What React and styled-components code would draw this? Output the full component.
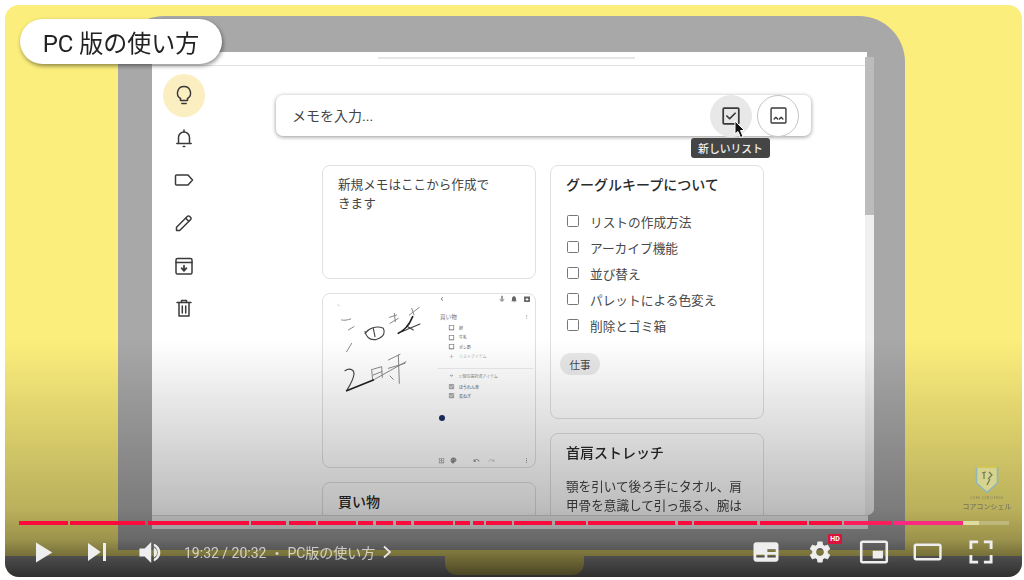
import React from "react";
import styled, { createGlobalStyle } from "styled-components";
import {
  MdSettings,
  MdOutlineCheckBoxOutlineBlank,
  MdCheckBox,
  MdChevronLeft,
  MdMicNone,
  MdMoreVert,
  MdAdd,
  MdExpandMore,
  MdUndo,
  MdRedo,
  MdPalette,
  MdOutlineAddBox,
  MdNotifications,
  MdArchive,
} from "react-icons/md";

const GlobalStyle = createGlobalStyle`
  html, body {
    margin: 0;
    padding: 0;
    background: #fff;
    overflow: hidden;
  }
  body {
    font-family: Roboto, "Noto Sans CJK JP", sans-serif;
  }
`;

//---------------------------------------------------------- frame
const Frame = styled.div`
  position: relative;
  margin: 5px 0 0 5px;
  width: 1017px;
  height: 572px;
  border-radius: 14px;
  overflow: hidden;
  background: #fcee7c;
  padding-top: 11px;
  box-sizing: border-box;
`;
const Laptop = styled.div`
  margin-left: 113px;
  width: 787px;
  height: 534px;
  box-sizing: border-box;
  padding: 36px 31px 0 34px;
  background: #a8a8a8;
  border-radius: 46px 46px 0 0;
`;
const Base = styled.div`
  margin-top: 6px;
  height: 21px;
  background: #a8a8a8;
  display: flex;
`;
const Notch = styled.div`
  margin-left: 440px;
  width: 139px;
  height: 19px;
  background: #fcee7c;
  border-radius: 0 0 12px 12px;
`;
const Shade = styled.div`
  position: absolute;
  inset: 0;
  pointer-events: none;
  background: linear-gradient(
    to bottom,
    rgba(0, 0, 0, 0) 58.6%,
    rgba(0, 0, 0, 0.12) 72.6%,
    rgba(0, 0, 0, 0.26) 88%,
    rgba(0, 0, 0, 0.38) 93.4%,
    rgba(0, 0, 0, 0.54) 96.4%,
    rgba(0, 0, 0, 0.72) 100%
  );
`;
const Badge = styled.div`
  position: absolute;
  left: 15px;
  top: 14px;
  width: 202px;
  height: 45px;
  border-radius: 23px;
  background: #fff;
  box-shadow: 1px 2px 4px rgba(0, 0, 0, 0.45);
  display: flex;
  align-items: center;
  justify-content: center;
  font-size: 24px;
  color: #222;
  white-space: nowrap;
  filter: blur(0.3px);
`;

//---------------------------------------------------------- laptop screen
const Screen = styled.div`
  display: flex;
  flex-direction: column;
  filter: blur(0.4px);
`;
const TopStrip = styled.div`
  height: 14px;
  display: flex;
`;
const TabArea = styled.div`
  width: 715px;
  flex: none;
  box-sizing: border-box;
  background: #fff;
  border-bottom: 1px solid #e2e2e2;
  display: flex;
  justify-content: center;
`;
const TopTab = styled.div`
  margin: 5px 6px 0 0;
  width: 257px;
  height: 2px;
  background: #e6e6e6;
`;
const ScrollCap = styled.div`
  margin: 5px 0 0 -2px;
  width: 9px;
  height: 9px;
  background: #bcbcbc;
`;
const Body = styled.div`
  height: 449px;
  display: flex;
  background: #fff;
  overflow: hidden;
  border-radius: 0 0 7px 0;
`;
const BottomStrip = styled.div`
  width: 716px;
  height: 14px;
  background: #f4f4f4;
  border-top: 1px solid #d8d8d8;
  box-sizing: border-box;
`;
const Sidebar = styled.nav`
  width: 64px;
  flex: none;
  padding: 8px 0 0 11px;
  box-sizing: border-box;
  display: flex;
  flex-direction: column;
`;
const NavItem = styled.div`
  width: 42px;
  height: 42.6px;
  display: flex;
  align-items: center;
  justify-content: center;
  border-radius: 50%;
  background: ${(p) => (p.$active ? "#fbeec0" : "transparent")};
`;
const StrokeIcon = styled.svg`
  width: ${(p) => p.$size || 24}px;
  height: ${(p) => p.$size || 24}px;
  fill: none;
  stroke: #3a3a3a;
  stroke-width: ${(p) => p.$stroke || 1.5};
  stroke-linecap: round;
  stroke-linejoin: round;
`;
const Main = styled.main`
  flex: 1;
  padding: 29px 0 0 60px;
  display: flex;
  flex-direction: column;
`;
const Scrollbar = styled.div`
  width: 9px;
  flex: none;
  background: #f0f0f0;
  display: flex;
  flex-direction: column;
`;
const ScrollThumb = styled.div`
  height: 149px;
  background: #bcbcbc;
`;

//---------------------------------------------------------- note input
const NoteInput = styled.div`
  position: relative;
  width: 535px;
  height: 41px;
  box-sizing: border-box;
  padding: 0 12px 0 16px;
  border-radius: 7px;
  background: #fff;
  box-shadow: 0 1px 4px rgba(0, 0, 0, 0.42);
  display: flex;
  align-items: center;
  gap: 5px;
`;
const Placeholder = styled.div`
  flex: 1;
  margin-top: -2px;
  font-size: 14px;
  color: #444;
`;
const RoundButton = styled.div`
  width: 42px;
  height: 42px;
  border-radius: 50%;
  box-sizing: border-box;
  display: flex;
  align-items: center;
  justify-content: center;
  background: ${(p) => (p.$hover ? "#e8e8e8" : "#fff")};
  border: ${(p) => (p.$hover ? "none" : "1.5px solid #c4c4c4")};
`;
const Tooltip = styled.div`
  position: absolute;
  right: 41px;
  top: 43px;
  width: 79px;
  height: 20px;
  border-radius: 3px;
  background: #454545;
  color: #eee;
  font-size: 10.8px;
  font-weight: 500;
  display: flex;
  align-items: center;
  justify-content: center;
  white-space: nowrap;
`;
const Cursor = styled.svg`
  position: absolute;
  left: 458px;
  top: 25px;
`;

//---------------------------------------------------------- notes
const Columns = styled.div`
  margin: 29px 0 0 46px;
  display: flex;
  gap: 14px;
`;
const Column = styled.div`
  width: 214px;
  display: flex;
  flex-direction: column;
  gap: 14px;
`;
const Card = styled.article`
  flex: none;
  height: ${(p) => p.$h}px;
  box-sizing: border-box;
  padding: ${(p) => p.$pad || "9px 15px"};
  border: 1px solid #e0e0e0;
  border-radius: 8px;
  background: #fff;
  overflow: hidden;
  display: ${(p) => (p.$row ? "flex" : "block")};
`;
const CardText = styled.div`
  font-size: 12.6px;
  line-height: 19px;
  color: #444;
`;
const CardTitle = styled.h3`
  margin: 0 0 14px;
  font-size: 14px;
  font-weight: 500;
  line-height: 20px;
  color: #2a2a2a;
`;
const CheckList = styled.ul`
  margin: -1px 0 0 1px;
  padding: 0;
  list-style: none;
`;
const CheckItem = styled.li`
  height: 26px;
  display: flex;
  align-items: center;
  gap: 11px;
  font-size: 12.7px;
  color: #484848;
`;
const CheckBoxMark = styled.span`
  width: 12px;
  height: 12px;
  box-sizing: border-box;
  border: 1.5px solid #777;
  border-radius: 1.5px;
`;
const Chip = styled.span`
  display: inline-flex;
  align-items: center;
  justify-content: center;
  margin: 15px 0 0 -6px;
  width: 40px;
  height: 22px;
  border-radius: 11px;
  background: #e9e9e9;
  color: #444;
  font-size: 10.5px;
`;

//---------------------------------------------------------- photo note
const Doodle = styled.svg`
  width: 115px;
  height: 172px;
  flex: none;
  fill: none;
  stroke-linecap: round;
  stroke-linejoin: round;
`;
const MiniPanel = styled.div`
  width: 95px;
  flex: none;
  display: flex;
  flex-direction: column;
  padding-bottom: 2px;
`;
const MiniRow = styled.div`
  height: ${(p) => p.$h || 9.5}px;
  margin-top: ${(p) => p.$mt || 0}px;
  padding-left: ${(p) => p.$pl || 0}px;
  display: flex;
  align-items: center;
  gap: ${(p) => p.$gap ?? 4}px;
  white-space: nowrap;
  color: ${(p) => p.$color || "#555"};
  font-size: ${(p) => p.$fs || 4}px;
`;
const MiniGrow = styled.span`
  flex: 1;
`;
const MiniRule = styled.div`
  margin-top: 7px;
  height: 1px;
  background: #ececec;
`;
const MiniDot = styled.div`
  margin: 15px 0 0 1px;
  width: 6px;
  height: 6px;
  border-radius: 50%;
  background: #1e2f66;
`;
const MiniFoot = styled(MiniRow)`
  margin-top: auto;
`;
const Blank = styled.span`
  width: ${(p) => p.$w}px;
  flex: none;
`;

//---------------------------------------------------------- player
const Controls = styled.div`
  position: absolute;
  left: 0;
  right: 0;
  bottom: 0;
`;
const Track = styled.div`
  margin: 0 0 2px 14px;
  display: flex;
  height: 4px;
`;
const Segment = styled.div`
  flex: none;
  height: 4px;
  background: ${(p) => p.$color};
`;
const ControlRow = styled.div`
  height: 50px;
  display: flex;
  align-items: center;
  padding-left: 16px;
`;
const Ctl = styled.svg`
  flex: none;
  width: ${(p) => p.$size}px;
  height: ${(p) => p.$size}px;
  margin-left: ${(p) => p.$ml || 0}px;
  fill: #eee;
`;
const Chevron = styled.svg`
  flex: none;
  margin-left: 8px;
  fill: none;
  stroke: #e8e8e8;
  stroke-width: 1.8;
`;
const TimeText = styled.div`
  margin-left: 8px;
  font-size: 14px;
  color: rgba(255, 255, 255, 0.68);
  white-space: nowrap;
`;
const RightControls = styled.div`
  margin-left: auto;
  padding-right: 15px;
  display: flex;
  align-items: center;
`;
const GearWrap = styled.div`
  position: relative;
  margin: 0 18px 0 16px;
  width: 26px;
  height: 26px;
  font-size: 26px;
  line-height: 0;
  color: #eee;
`;
const HdBadge = styled.span`
  position: absolute;
  left: 21px;
  top: -5px;
  width: 14px;
  height: 10px;
  border-radius: 1px;
  background: #d8143c;
  color: #fff;
  font-size: 7px;
  font-weight: 700;
  line-height: 10px;
  text-align: center;
`;
const Watermark = styled.div`
  position: absolute;
  right: 10px;
  top: 460px;
  width: 50px;
  display: flex;
  flex-direction: column;
  align-items: center;
  color: #85825c;
`;
const WatermarkSmall = styled.div`
  margin-top: 2px;
  font-size: 3px;
  letter-spacing: 0.6px;
  white-space: nowrap;
`;
const WatermarkName = styled.div`
  margin-top: 1px;
  font-size: 7px;
  font-weight: 700;
  white-space: nowrap;
`;

//---------------------------------------------------------- icons
const icons = [
  <>
    <path d="M12 3.5 a6.5 6.5 0 0 0 -3.5 12 V17.5 h7 V15.5 a6.5 6.5 0 0 0 -3.5 -12 Z" />
    <path d="M9.8 20.5 h4.4" />
  </>,
  <>
    <path d="M6.5 17 V11.5 a5.5 5.5 0 0 1 11 0 V17" />
    <path d="M4.8 17.5 h14.4" />
    <path d="M12 4 v2" />
    <path d="M11.2 20.5 h1.6" />
  </>,
  <path d="M4.5 7 h11.5 l4.5 5 -4.5 5 h-11.5 a1 1 0 0 1 -1 -1 v-8 a1 1 0 0 1 1 -1 Z" />,
  <>
    <path d="M4.5 19.5 v-3.2 L15.5 5.3 a1.4 1.4 0 0 1 2 0 l1.2 1.2 a1.4 1.4 0 0 1 0 2 L7.7 19.5 Z" />
    <path d="M13.7 7.2 l3.1 3.1" />
  </>,
  <>
    <rect x="4" y="4.5" width="16" height="15.5" rx="1.5" />
    <path d="M4 8.5 h16" />
    <path d="M12 11.5 v4.5 M9.6 14.2 l2.4 2.6 2.4 -2.6" strokeWidth="1.7" />
  </>,
  <>
    <path d="M5 6.5 h14" />
    <path d="M9.5 6.5 V4.5 h5 v2" />
    <path d="M7 6.5 V20 h10 V6.5" />
    <path d="M10.3 10 v7 M13.7 10 v7" />
  </>,
];

//---------------------------------------------------------- data
const listItems = [
  "リストの作成方法",
  "アーカイブ機能",
  "並び替え",
  "パレットによる色変え",
  "削除とゴミ箱",
];
// start and end of each chapter on the progress bar
const chapters = [
  [19, 68], [70, 145], [148, 249], [251, 286], [289, 316], [318, 356],
  [358, 373], [376, 393], [396, 411], [414, 453], [455, 470], [473, 484],
  [486, 512], [514, 552], [555, 586], [588, 675], [678, 692], [694, 757],
  [760, 807], [809, 842], [844, 892], [894, 963], [963, 979], [979, 1009],
];
const segmentColor = (start) => {
  if (start >= 979) return "rgba(255,255,255,0.22)";
  if (start >= 963) return "#dfdca0";
  if (start >= 894) return "#fb2a80";
  if (start >= 844) return "#fb1c5c";
  return "#fb0a3c";
};

function App() {
  return (
    <>
      <GlobalStyle />
      <Frame>
        <Laptop>
          <Screen>
            <TopStrip>
              <TabArea>
                <TopTab />
              </TabArea>
              <ScrollCap />
            </TopStrip>
            <Body>
              <Sidebar>
                {icons.map((icon, i) => (
                  <NavItem key={i} $active={i === 0}>
                    <StrokeIcon viewBox="0 0 24 24">{icon}</StrokeIcon>
                  </NavItem>
                ))}
              </Sidebar>
              <Main>
                <NoteInput>
                  <Placeholder>メモを入力...</Placeholder>
                  <RoundButton $hover>
                    <StrokeIcon viewBox="0 0 24 24" $size={22} $stroke={1.9}>
                      <rect x="3.5" y="3.5" width="17" height="17" rx="1" />
                      <path d="M7.5 12 l3 3 6 -6" />
                    </StrokeIcon>
                  </RoundButton>
                  <RoundButton>
                    <StrokeIcon viewBox="0 0 24 24" $size={21} $stroke={1.6}>
                      <rect x="3.5" y="3.5" width="17" height="17" rx="1" />
                      <path d="M7 16 l2 -2 2 2 M13 16 l2 -2 2 2" />
                    </StrokeIcon>
                  </RoundButton>
                  <Tooltip>新しいリスト</Tooltip>
                  <Cursor width="13" height="19" viewBox="0 0 13 19">
                    <path
                      d="M1 1 L1 14 L4 11.5 L6.5 17.5 L9 16.5 L6.5 10.5 L10.5 10.5 Z"
                      fill="#111"
                      stroke="#fff"
                      strokeWidth="1"
                    />
                  </Cursor>
                </NoteInput>
                <Columns>
                  <Column>
                    <Card $h={114}>
                      <CardText>
                        新規メモはここから作成で
                        <br />
                        きます
                      </CardText>
                    </Card>
                    <Card $h={175} $row $pad="0">
                      <Doodle viewBox="-21 -18 345 516">
                        <g stroke="#777" strokeWidth="2.6">
                          <path d="M25 15 l1 1" />
                          <path d="M35 60 C44 62 52 60 62 57" />
                          <path d="M55 90 L72 80" />
                          <path d="M50 155 L65 130" />
                          <path d="M178 52 L200 45" />
                          <path d="M193 40 L196 65" />
                          <path d="M180 70 L205 55" />
                          <path d="M238 45 L268 22" />
                          <path d="M245 25 L252 45" />
                          <path d="M125 208 L128 240" />
                          <path d="M128 208 L155 200 L157 232" />
                          <path d="M130 225 L155 215" />
                          <path d="M175 180 L210 163" />
                          <path d="M205 165 L208 250" />
                          <path d="M175 205 L225 190" />
                          <path d="M180 228 L190 238" />
                          <path d="M130 240 L228 185" />
                        </g>
                        <g stroke="#444" strokeWidth="3.4">
                          <path d="M105 95 C110 115 120 122 140 118 C165 110 165 95 160 85 C140 75 115 85 105 100" />
                          <path d="M130 85 L135 110" />
                          <path d="M215 95 L270 72" />
                          <path d="M230 78 L250 90" />
                          <path d="M45 212 C55 205 72 205 72 222 C70 240 60 255 50 272" />
                        </g>
                        <g stroke="#222" strokeWidth="5">
                          <path d="M205 100 C225 90 240 70 248 50" />
                          <path d="M50 272 L130 240" />
                        </g>
                      </Doodle>
                      <MiniPanel>
                        <MiniRow $h={10} $fs={8} $color="#666" $gap={0}>
                          <MdChevronLeft />
                          <MiniGrow />
                          <MdMicNone />
                          <Blank $w={4} />
                          <MdNotifications />
                          <Blank $w={5} />
                          <MdArchive />
                          <Blank $w={2} />
                        </MiniRow>
                        <MiniRow $h={10} $mt={8} $fs={5.6} $pl={0} $gap={0} $color="#777">
                          <Blank $w={2} />
                          買い物
                          <MiniGrow />
                          <MdMoreVert />
                          <Blank $w={3} />
                        </MiniRow>
                        <MiniRow $mt={1} $pl={10}>
                          <MdOutlineCheckBoxOutlineBlank size={7} />卵
                        </MiniRow>
                        <MiniRow $pl={10}>
                          <MdOutlineCheckBoxOutlineBlank size={7} />牛乳
                        </MiniRow>
                        <MiniRow $pl={10}>
                          <MdOutlineCheckBoxOutlineBlank size={7} />ポン酢
                        </MiniRow>
                        <MiniRow $pl={10} $color="#aaa">
                          <MdAdd size={7} />リストアイテム
                        </MiniRow>
                        <MiniRule />
                        <MiniRow $h={9} $mt={2} $pl={10} $color="#888">
                          <MdExpandMore size={7} />2 個の選択済アイテム
                        </MiniRow>
                        <MiniRow $h={9} $mt={2} $pl={10}>
                          <MdCheckBox size={7} color="#aaa" />ほうれん草
                        </MiniRow>
                        <MiniRow $h={9} $pl={10}>
                          <MdCheckBox size={7} color="#aaa" />長ねぎ
                        </MiniRow>
                        <MiniDot />
                        <MiniFoot $h={10} $fs={7} $color="#888" $gap={0}>
                          <MdOutlineAddBox />
                          <Blank $w={5} />
                          <MdPalette />
                          <Blank $w={16} />
                          <MdUndo />
                          <Blank $w={8} />
                          <MdRedo color="#ccc" />
                          <MiniGrow />
                          <MdMoreVert />
                          <Blank $w={3} />
                        </MiniFoot>
                      </MiniPanel>
                    </Card>
                    <Card $h={60}>
                      <CardTitle>買い物</CardTitle>
                    </Card>
                  </Column>
                  <Column>
                    <Card $h={254}>
                      <CardTitle>グーグルキープについて</CardTitle>
                      <CheckList>
                        {listItems.map((item) => (
                          <CheckItem key={item}>
                            <CheckBoxMark />
                            {item}
                          </CheckItem>
                        ))}
                      </CheckList>
                      <Chip>仕事</Chip>
                    </Card>
                    <Card $h={120}>
                      <CardTitle>首肩ストレッチ</CardTitle>
                      <CardText>
                        顎を引いて後ろ手にタオル、肩
                        <br />
                        甲骨を意識して引っ張る、腕は
                      </CardText>
                    </Card>
                  </Column>
                </Columns>
              </Main>
              <Scrollbar>
                <ScrollThumb />
              </Scrollbar>
            </Body>
            <BottomStrip />
          </Screen>
        </Laptop>
        <Base>
          <Notch />
        </Base>
        <Shade />
        <Badge>PC 版の使い方</Badge>
        <Watermark>
          <svg width="24" height="29" viewBox="0 0 24 29">
            <path d="M1.5 2 H22.5 V18 L12 27.5 L1.5 18 Z" fill="#d6d48e" stroke="#8fb6bb" strokeWidth="1.6" />
            <path d="M1.5 2 H22.5" stroke="#d8c84a" strokeWidth="1.8" />
            <path d="M7 8 L11 7 M9 7 L9 14 M14 7 L17 10 L13 14 M12 20 L15 14" stroke="#6f7a52" strokeWidth="1.2" fill="none" />
          </svg>
          <WatermarkSmall>CORE CONCIERGE</WatermarkSmall>
          <WatermarkName>コアコンシェル</WatermarkName>
        </Watermark>
        <Controls>
          <Track>
            {chapters.map(([start, end], i) => {
              const next = chapters[i + 1];
              return (
                <Segment
                  key={start}
                  $color={segmentColor(start)}
                  style={{
                    width: end - start,
                    marginRight: next ? next[0] - end : 0,
                  }}
                />
              );
            })}
          </Track>
          <ControlRow>
            <Ctl $size={45} viewBox="0 0 36 36">
              <path d="M12 26 L25 18 L12 10 Z" />
            </Ctl>
            <Ctl $size={54} $ml={4} viewBox="0 0 36 36">
              <path d="M12 24 L20.5 18 L12 12 Z M22 12 v12 h2 V12 Z" />
            </Ctl>
            <Ctl $size={47} $ml={5} viewBox="0 0 36 36">
              <path d="M8 21 L12 21 L17 26 L17 10 L12 15 L8 15 Z M19 14 L19 22 C20.48 21.32 21.5 19.77 21.5 18 C21.5 16.26 20.48 14.74 19 14 Z M19 11.29 C21.89 12.15 24 14.83 24 18 C24 21.17 21.89 23.85 19 24.71 L19 22.7 C20.8 22 22 20.1 22 18 C22 15.9 20.8 14 19 13.3 Z" />
            </Ctl>
            <TimeText>19:32 / 20:32 ・ PC版の使い方</TimeText>
            <Chevron width="8" height="14" viewBox="0 0 8 14">
              <path d="M1 1.5 L7 7 L1 12.5" />
            </Chevron>
            <RightControls>
              <Ctl $size={50} viewBox="0 0 36 36">
                <path
                  fillRule="evenodd"
                  d="M11 11 C9.9 11 9 11.9 9 13 L9 23 C9 24.1 9.9 25 11 25 L25 25 C26.1 25 27 24.1 27 23 L27 13 C27 11.9 26.1 11 25 11 Z M11 20 H17 V22 H11 Z M19 20 H25 V22 H19 Z M19 16 H25 V18 H19 Z"
                />
              </Ctl>
              <GearWrap>
                <MdSettings />
                <HdBadge>HD</HdBadge>
              </GearWrap>
              <Ctl $size={46} viewBox="0 0 36 36">
                <path
                  fillRule="evenodd"
                  d="M25 17 H17 V23 H25 Z M29 25 V10.98 C29 9.88 28.1 9 27 9 H9 C7.9 9 7 9.88 7 10.98 V25 C7 26.1 7.9 27 9 27 H27 C28.1 27 29 26.1 29 25 Z M27 25.02 H9 V10.97 H27 Z"
                />
              </Ctl>
              <Ctl $size={44} $ml={8} viewBox="0 0 36 36">
                <path
                  fillRule="evenodd"
                  d="M28 11 H9 C7.9 11 7 11.9 7 13 V23 C7 24.1 7.9 25 9 25 H28 C29.1 25 30 24.1 30 23 V13 C30 11.9 29.1 11 28 11 Z M28 23 H9 V13 H28 Z"
                />
              </Ctl>
              <Ctl $size={52} $ml={6} viewBox="0 0 36 36">
                <path d="M10 16 h2 v-4 h4 v-2 H10 Z M20 10 v2 h4 v4 h2 V10 Z M24 24 h-4 v2 h6 V20 h-2 Z M12 20 h-2 v6 h6 v-2 h-4 Z" />
              </Ctl>
            </RightControls>
          </ControlRow>
        </Controls>
      </Frame>
    </>
  );
}

export default App;
